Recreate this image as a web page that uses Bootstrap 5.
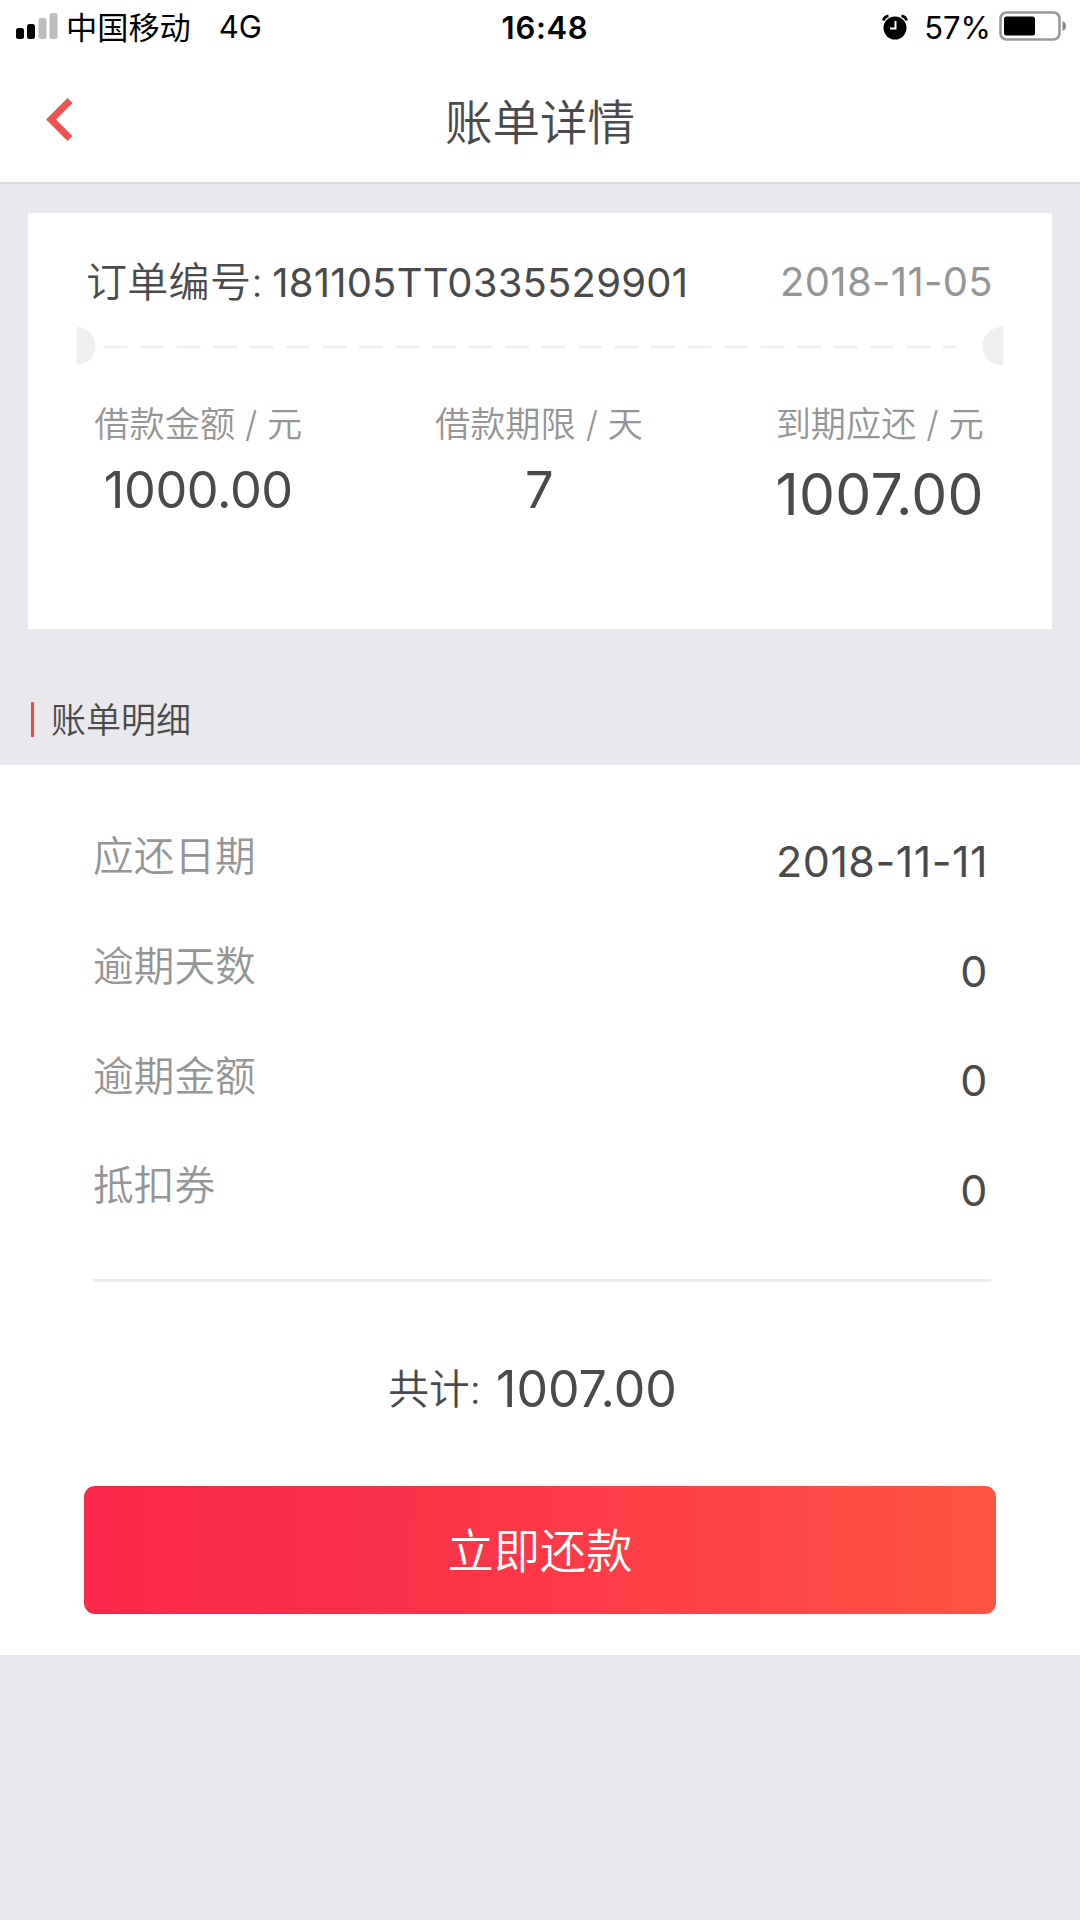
<!DOCTYPE html>
<html lang="zh-CN">
<head>
<meta charset="utf-8">
<meta name="viewport" content="width=device-width, initial-scale=1">
<title>账单详情</title>
<link href="https://cdn.jsdelivr.net/npm/bootstrap@5.3.0/dist/css/bootstrap.min.css" rel="stylesheet">
<style>
  body { font-family: Inter, "Noto Sans CJK SC", sans-serif; background: #e9e8ed; color: #4a4a4a; line-height: 1; min-height: 1920px; font-weight: 370; }
  .cjk { font-weight: 350; }
  .status-bar { height: 54px; font-size: 31px; color: #000; padding: 0 13px 0 15px; }
  .side { flex: 1 1 0; }
  .carrier { font-size: 31.2px; margin-left: 8px; padding-top: 3px; }
  .network { margin-left: 28px; font-size: 31px; }
  .clock { font-size: 31px; letter-spacing: .7px; padding-left: 8px; }
  .title-bar { height: 130px; border-bottom: 2px solid #dcdbe0; padding: 0 44px; }
  .back { width: 32px; height: 46px; margin-top: 2px; }
  .title-text { font-size: 47.5px; padding-top: 8px; }
  .order-card { margin: 29px 28px 0; height: 416px; border: 0; border-radius: 0; padding: 46px 0 0; }
  .order-head { height: 46px; padding: 0 59px 0 58px; font-size: 40px; }
  .order-label { font-size: 41px; letter-spacing: .3px; }
  .order-no { letter-spacing: .2px; margin-left: -2px; }
  .order-date { letter-spacing: .35px; }
  .muted { color: #959595; }
  .ticket { margin: 21px 48px 0 48px; height: 40px; }
  .figures { margin: 34px 2px 0 0; }
  .figure-label { font-size: 35.2px; height: 48px; line-height: 48px; white-space: nowrap; }
  .figure-value { font-size: 50.5px; height: 68px; padding-top: 15px; line-height: 54px; letter-spacing: -.4px; }
  .figure-total { font-size: 57px; line-height: 63px; letter-spacing: .3px; }
  .section-head { height: 136px; padding: 44px 0 0 31px; font-size: 35px; }
  .section-mark { width: 3px; height: 35px; background: #ea4c4c; margin-right: 17px; }
  .section-title { font-size: inherit; padding-top: 2px; }
  .detail-panel { height: 890px; padding: 38px 84px 0; }
  .detail-list { padding: 0 8px 0 9px; }
  .detail-row { height: 109.6px; font-size: 40.7px; }
  .detail-value { font-size: 43px; padding-top: 8px; letter-spacing: .5px; }
  .detail-rule { height: 3px; margin: 38px 5px 0 9px; background: #ebebec; opacity: 1; }
  .total-row { height: 60px; margin-top: 76px; padding-right: 15px; font-size: 40.7px; }
  .total-label { padding-top: 3px; }
  .total-value { font-size: 50px; margin-left: 15px; padding-top: 1px; }
  .pay-btn { height: 128px; margin-top: 68px; padding: 8px 0 6px; border: 0; border-radius: 11px; font-size: 46.3px; line-height: 1; color: #fff; background: linear-gradient(90deg, #fb2848 0%, #f9304a 30%, #fd3b47 55%, #fc4a46 80%, #fc5541 100%); }
</style>
<script src="https://cdn.jsdelivr.net/npm/bootstrap@5.3.0/dist/js/bootstrap.bundle.min.js"></script>
</head>
<body>
<header class="bg-white">
  <div class="status-bar d-flex align-items-center">
    <div class="side d-flex align-items-center">
      <svg width="43" height="28" viewBox="0 0 43 28"><rect x="1" y="15" width="8" height="11" rx="2.5"/><rect x="12" y="11" width="8" height="15" rx="2.5"/><rect x="23.500" y="5" width="8" height="21" rx="2.500" fill="#bdbdbd"/><rect x="34.500" y="0" width="8" height="26" rx="2.500" fill="#bdbdbd"/></svg>
      <span class="carrier">中国移动</span>
      <span class="network">4G</span>
    </div>
    <div class="clock fw-semibold">16:48</div>
    <div class="side d-flex align-items-center justify-content-end">
      <svg width="26" height="26" viewBox="0 0 26 26"><circle cx="13" cy="14" r="11.500"/><path d="M1 7.500Q.5 2 6.500 1.500M25 7.500Q25.500 2 19.500 1.500" fill="none" stroke="#fff" stroke-width="5"/><path d="M1.500 6.500Q2 2.500 6.500 1.800M24.500 6.500Q24 2.500 19.500 1.800" fill="none" stroke="#000" stroke-width="2.800"/><path d="M13.500 7v7.500H8" fill="none" stroke="#fff" stroke-width="2"/></svg>
      <span class="ms-3">57%</span>
      <svg class="ms-2" width="68" height="32" viewBox="0 0 68 32"><rect x="1.500" y="1.500" width="59" height="27" rx="6" fill="none" stroke="#999" stroke-width="2.600"/><rect x="5" y="5.500" width="31" height="19" rx="2.500"/><path d="M63.500 10q3.500 1.500 3.500 5t-3.500 5z" fill="#888"/></svg>
    </div>
  </div>
  <div class="title-bar d-flex align-items-center">
    <div class="side d-flex">
      <svg class="back" viewBox="0 0 32 46"><path d="M26 4.500 7 23.500 26 42.500" fill="none" stroke="#ef5350" stroke-width="7"/></svg>
    </div>
    <h1 class="title-text cjk mb-0">账单详情</h1>
    <div class="side"></div>
  </div>
</header>

<main>
  <section class="order-card card">
    <div class="order-head d-flex align-items-center justify-content-between">
      <div><span class="order-label cjk">订单编号:</span> <span class="order-no">181105TT0335529901</span></div>
      <div class="order-date muted">2018-11-05</div>
    </div>
    <svg class="ticket" viewBox="0 0 927 40"><path d="M0 1a19 19 0 0 1 0 38zM927 1h-2a19 19 0 0 0 0 38h2z" fill="#efefef"/><path d="M27 21H880" stroke="#efefef" stroke-width="2.500" stroke-dasharray="24 12.500"/></svg>
    <div class="figures row g-0 text-center">
      <div class="col-4">
        <div class="figure-label cjk muted">借款金额 / 元</div>
        <div class="figure-value">1000.00</div>
      </div>
      <div class="col-4">
        <div class="figure-label cjk muted">借款期限 / 天</div>
        <div class="figure-value">7</div>
      </div>
      <div class="col-4">
        <div class="figure-label cjk muted">到期应还 / 元</div>
        <div class="figure-value figure-total">1007.00</div>
      </div>
    </div>
  </section>

  <div class="section-head d-flex align-items-center">
    <span class="section-mark"></span>
    <h2 class="section-title cjk mb-0">账单明细</h2>
  </div>

  <section class="detail-panel bg-white">
    <div class="detail-list">
      <div class="detail-row d-flex align-items-center justify-content-between"><span class="cjk muted">应还日期</span><span class="detail-value">2018-11-11</span></div>
      <div class="detail-row d-flex align-items-center justify-content-between"><span class="cjk muted">逾期天数</span><span class="detail-value">0</span></div>
      <div class="detail-row d-flex align-items-center justify-content-between"><span class="cjk muted">逾期金额</span><span class="detail-value">0</span></div>
      <div class="detail-row d-flex align-items-center justify-content-between"><span class="cjk muted">抵扣券</span><span class="detail-value">0</span></div>
    </div>
    <div class="detail-rule"></div>
    <div class="total-row d-flex align-items-center justify-content-center">
      <span class="total-label cjk">共计:</span><span class="total-value">1007.00</span>
    </div>
    <button type="button" class="pay-btn btn w-100 cjk">立即还款</button>
  </section>
</main>
</body>
</html>
